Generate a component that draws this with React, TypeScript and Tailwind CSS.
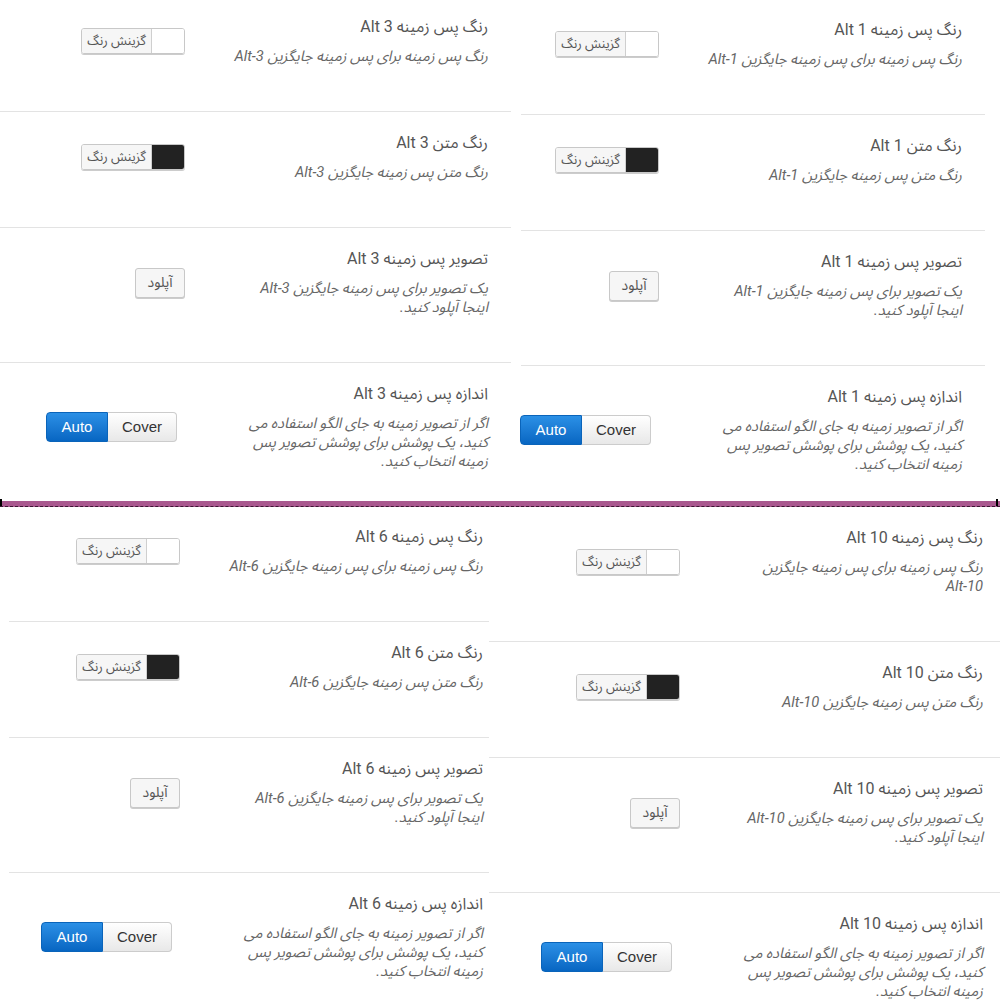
import React from "react";

type Kind = "bg" | "text" | "img" | "size";

const FONT = "font-['Roboto','Noto_Sans_Arabic','DejaVu_Sans',sans-serif]";

function Picker({ dark }: { dark?: boolean }) {
  return (
    <div
      dir="ltr"
      className="flex h-[26px] w-[104px] overflow-hidden rounded-[3px] border border-[#c8c8c8] shadow-[0_1px_0_#cccccc]"
    >
      <span className="flex w-[70px] items-center justify-center border-r border-[#cfcfcf] bg-[#f6f6f6] text-[13px] text-[#555]">
        گزینش رنگ
      </span>
      <span className={dark ? "flex-1 bg-[#222222]" : "flex-1 bg-white"} />
    </div>
  );
}

function Upload() {
  return (
    <div className="flex h-[30px] w-[50px] items-center justify-center rounded-[3px] border border-[#c8c8c8] bg-[#f6f6f6] text-[14px] text-[#555] shadow-[0_1px_0_#cccccc]">
      آپلود
    </div>
  );
}

function SizeToggle() {
  return (
    <div dir="ltr" className="mr-2 flex h-[30px] font-['Liberation_Sans',Arial,sans-serif] text-[15px]">
      <span className="flex w-[62px] items-center justify-center rounded-l-[4px] border border-[#0a64ba] bg-linear-to-b from-[#2b90e6] to-[#0766c2] text-white">
        Auto
      </span>
      <span className="flex w-[69px] items-center justify-center rounded-r-[4px] border border-l-0 border-[#cccccc] bg-linear-to-b from-white to-[#e8e8e8] text-[#333]">
        Cover
      </span>
    </div>
  );
}

function Row({
  title,
  lines,
  kind,
  rowCls,
}: {
  title: string;
  lines: string[];
  kind: Kind;
  rowCls: string;
}) {
  return (
    <div dir="rtl" className={"flex items-center gap-[45px] border-b border-[#e3e3e3] pt-5 pb-[45px] " + rowCls}>
      <div className="w-[258px] shrink-0 text-right">
        <div className="mb-[9px] whitespace-nowrap text-[16px] leading-[22px] text-[#555]">{title}</div>
        <div className="text-[14.7px] italic leading-[19px] text-[#666]">
          {lines.map((l, i) => (
            <div key={i} className="whitespace-nowrap">
              {l}
            </div>
          ))}
        </div>
      </div>
      <div className="flex flex-1 justify-start">
        {kind === "bg" && <Picker />}
        {kind === "text" && <Picker dark />}
        {kind === "img" && <Upload />}
        {kind === "size" && <SizeToggle />}
      </div>
    </div>
  );
}

function Panel({
  n,
  panelCls,
  innerCls,
  rowCls,
  wrapFirst,
}: {
  n: string;
  panelCls: string;
  innerCls: string;
  rowCls: string;
  wrapFirst?: boolean;
}) {
  const firstLines = wrapFirst
    ? ["رنگ پس زمینه برای پس زمینه جایگزین", `Alt-${n}`]
    : [`رنگ پس زمینه برای پس زمینه جایگزین Alt-${n}`];
  return (
    <div className={"overflow-hidden " + panelCls}>
      <div className={innerCls}>
        <Row title={`رنگ پس زمینه Alt ${n}`} lines={firstLines} kind="bg" rowCls={rowCls} />
        <Row title={`رنگ متن Alt ${n}`} lines={[`رنگ متن پس زمینه جایگزین Alt-${n}`]} kind="text" rowCls={rowCls} />
        <Row
          title={`تصویر پس زمینه Alt ${n}`}
          lines={[`یک تصویر برای پس زمینه جایگزین Alt-${n}`, "اینجا آپلود کنید."]}
          kind="img"
          rowCls={rowCls}
        />
        <Row
          title={`اندازه پس زمینه Alt ${n}`}
          lines={[
            "اگر از تصویر زمینه به جای الگو استفاده می",
            "کنید، یک پوشش برای پوشش تصویر پس",
            "زمینه انتخاب کنید.",
          ]}
          kind="size"
          rowCls={rowCls}
        />
      </div>
    </div>
  );
}

export default function App() {
  return (
    <div className={"h-[1000px] w-[1000px] overflow-hidden bg-white " + FONT}>
      <div className="flex h-[501px]">
        <Panel n="3" panelCls="h-[501px] w-[512px] shrink-0" innerCls="-mt-[4px]" rowCls="mr-px pr-[23px]" />
        <Panel n="1" panelCls="h-[501px] w-[488px] shrink-0" innerCls="-mt-px" rowCls="ml-[9px] mr-[15px] pr-[23px]" />
      </div>
      <div className="relative h-[6px] border-b border-dashed border-[#3a1832] bg-[#a9588f]">
        <span className="absolute -top-[2px] left-0 h-[7px] w-[2px] bg-black" />
        <span className="absolute -top-[2px] right-[2px] h-[7px] w-[2px] bg-black" />
      </div>
      <div className="flex h-[493px]">
        <Panel n="6" panelCls="h-[493px] w-[489px] shrink-0" innerCls="-mt-px" rowCls="ml-[9px] pr-[6px]" />
        <Panel n="10" panelCls="h-[493px] w-[511px] shrink-0" innerCls="" rowCls="pr-[17px]" wrapFirst />
      </div>
    </div>
  );
}
